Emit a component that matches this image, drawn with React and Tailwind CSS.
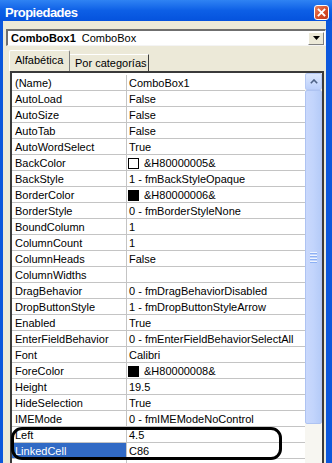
import React from "react";

const rows = [
  ["(Name)", "ComboBox1"],
  ["AutoLoad", "False"],
  ["AutoSize", "False"],
  ["AutoTab", "False"],
  ["AutoWordSelect", "True"],
  ["BackColor", "&H80000005&", "white"],
  ["BackStyle", "1 - fmBackStyleOpaque"],
  ["BorderColor", "&H80000006&", "black"],
  ["BorderStyle", "0 - fmBorderStyleNone"],
  ["BoundColumn", "1"],
  ["ColumnCount", "1"],
  ["ColumnHeads", "False"],
  ["ColumnWidths", ""],
  ["DragBehavior", "0 - fmDragBehaviorDisabled"],
  ["DropButtonStyle", "1 - fmDropButtonStyleArrow"],
  ["Enabled", "True"],
  ["EnterFieldBehavior", "0 - fmEnterFieldBehaviorSelectAll"],
  ["Font", "Calibri"],
  ["ForeColor", "&H80000008&", "black"],
  ["Height", "19.5"],
  ["HideSelection", "True"],
  ["IMEMode", "0 - fmIMEModeNoControl"],
  ["Left", "4.5"],
  ["LinkedCell", "C86", null, true],
  ["ListFillRange", "C81:C85"],
];

function Row({ name, value, swatch, selected }) {
  return (
    <div className="flex h-[16px] border-b border-[#c4c4c4] bg-white leading-[15px]">
      <div
        className={
          "w-[115px] shrink-0 border-r border-[#c4c4c4] pl-[3px] pt-[1px] whitespace-nowrap " +
          (selected ? "bg-[#316ac5] text-white" : "")
        }
      >
        {name}
      </div>
      <div className="flex-1 pl-[2px] pt-[1px] whitespace-nowrap overflow-hidden flex items-start">
        {swatch === "white" && (
          <span className="inline-block w-[11px] h-[11px] border border-black bg-white mt-[2px] mr-[5px] -ml-[1px]" />
        )}
        {swatch === "black" && (
          <span className="inline-block w-[11px] h-[11px] border border-black bg-black mt-[2px] mr-[5px] -ml-[1px]" />
        )}
        <span>{value}</span>
      </div>
    </div>
  );
}

export default function App() {
  return (
    <div className="relative w-[332px] h-[463px] overflow-hidden bg-[#0b57dc] font-['Liberation_Sans',Arial,sans-serif] text-[11px] text-black">
      {/* Title bar */}
      <div className="relative h-[21px] bg-linear-to-b from-[#2f83f3] via-[#0d5fe6] to-[#0552dd]">
        <div className="pl-[5px] pt-[6px] leading-[13px] text-[13px] font-bold text-white tracking-[-0.5px]">
          Propiedades
        </div>
        <div className="absolute left-[314px] top-[5px] w-[15px] h-[15px] rounded-[3px] border border-white bg-linear-to-br from-[#e8835f] via-[#d9502a] to-[#c1391a] flex items-center justify-center">
          <svg width="9" height="9" viewBox="0 0 9 9">
            <path d="M1.5 1.5 L7.5 7.5 M7.5 1.5 L1.5 7.5" stroke="white" strokeWidth="1.8" strokeLinecap="square" />
          </svg>
        </div>
      </div>

      {/* Body */}
      <div className="ml-[3px] mr-[6px] h-[442px] bg-[#ece9d8] pt-[8px]">
        {/* Combo */}
        <div className="ml-[3px] mr-0 h-[17px] flex items-center bg-white border-t-2 border-l-2 border-[#6f6f6f] border-b border-r border-b-[#f4f4f4] border-r-[#f4f4f4]">
          <div className="flex-1 pl-[3px] leading-[13px] whitespace-nowrap">
            <span className="font-bold">ComboBox1</span>
            <span className="ml-[6px]">ComboBox</span>
          </div>
          <div className="w-[16px] h-[13px] mr-[1px] bg-[#ece9d8] border border-t-white border-l-white border-b-[#808080] border-r-[#808080] flex items-center justify-center">
            <svg width="7" height="4" viewBox="0 0 7 4">
              <path d="M0 0 H7 L3.5 4 Z" fill="black" />
            </svg>
          </div>
        </div>

        {/* Tabs */}
        <div className="mt-[4px] h-[21px] flex items-end pl-[6px]">
          <div className="h-[21px] w-[61px] border-t border-l border-white border-r border-r-[#808080] rounded-t-[2px] pl-[5px] pt-[3px] leading-[13px] bg-[#ece9d8]">
            Alfabética
          </div>
          <div className="h-[17px] w-[79px] border-t border-white border-r border-r-[#404040] pl-[5px] pt-[2px] leading-[13px] bg-[#ece9d8]">
            Por categorías
          </div>
        </div>

        {/* Grid */}
        <div className="ml-[7px] w-[314px] h-[400px] border-2 border-[#3a3a3a] bg-white flex overflow-hidden">
          <div className="flex-1 pt-[2px] bg-white">
            {rows.map((r) => (
              <Row key={r[0]} name={r[0]} value={r[1]} swatch={r[2]} selected={r[3]} />
            ))}
          </div>
          <div className="w-[17px] shrink-0 flex flex-col bg-[#f5f4ee]">
            <div className="h-[17px] rounded-[2px] border border-[#b6c9f4] bg-linear-to-b from-[#dce7fe] to-[#bcd0fb] flex items-center justify-center">
              <svg width="8" height="5" viewBox="0 0 8 5">
                <path d="M0.8 4.2 L4 1 L7.2 4.2" stroke="#4d6185" strokeWidth="1.6" fill="none" />
              </svg>
            </div>
            <div className="h-[334px] rounded-[2px] border border-[#aec3f2] bg-linear-to-r from-[#c9d8fc] via-[#c2d4fc] to-[#b5cbf8] flex flex-col items-center justify-center gap-[1px]">
              {[0, 1, 2, 3].map((i) => (
                <div key={i} className="w-[7px] h-[2px] border-t border-t-[#eef4fe] border-b border-b-[#8cb0f4]" />
              ))}
            </div>
            <div className="flex-1 bg-[#f7f6f1]" />
          </div>
        </div>
      </div>

      {/* Annotation outline */}
      <div className="absolute left-[11px] top-[427px] w-[271px] h-[33px] border-[3px] border-black rounded-[11px]" />
    </div>
  );
}
